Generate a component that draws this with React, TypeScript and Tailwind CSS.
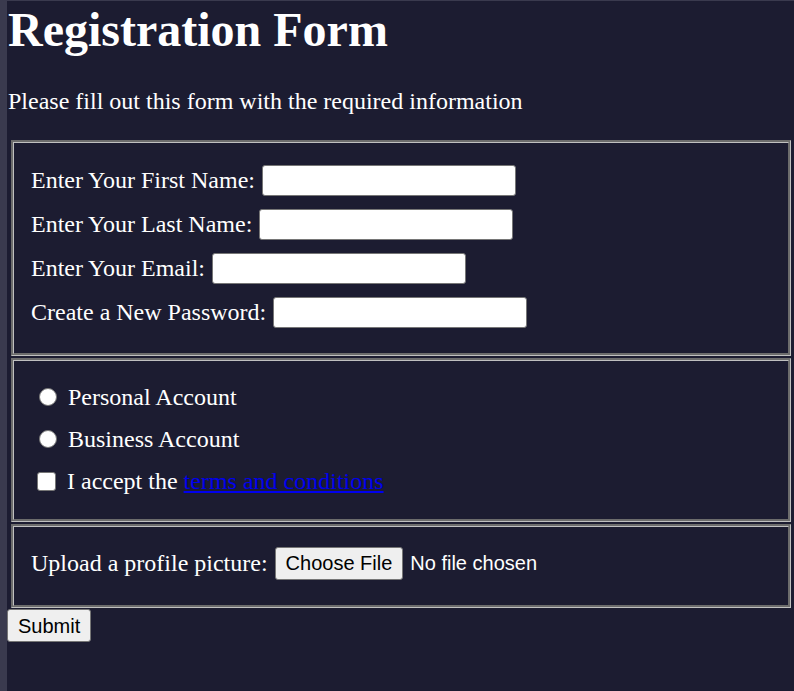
import React from "react"

const fieldsetCls =
  "mx-[3px] border-[3px] [border-style:groove] border-[#c0c0c0] pl-[17px] pr-[18px]"

const textInput =
  "ml-[7px] w-[254px] h-[31px] bg-white border border-[#767676] rounded-[3px] text-black text-[20px] px-[3px]"

const nativeBtn =
  "h-[33px] px-[10px] bg-[#efefef] border border-[#767676] rounded-[3px] text-black text-[20px] [font-family:'Liberation_Sans',Arial,sans-serif]"

function Row({ label, type }: { label: string; type: string }) {
  return (
    <div className="flex items-center h-[44px]">
      <label>{label}</label>
      <input type={type} className={textInput} />
    </div>
  )
}

export default function App() {
  return (
    <div className="min-h-[691px] bg-[#1c1c31] flex text-white text-[24px] [font-family:'Liberation_Serif','Times_New_Roman',serif]">
      <div className="w-[7px] shrink-0 bg-[#3a3a4e]" />
      <div className="flex-1 border-t border-[#3a3a4e] pl-[1px]">
        <h1 className="mt-[1px] h-[55px] leading-[55px] text-[48px] font-bold">Registration Form</h1>
        <p className="mt-[31px] h-[27px] leading-[27px]">Please fill out this form with the required information</p>

        <form className="mt-[25px]">
          <fieldset className={`${fieldsetCls} pt-[15px] pb-[19px]`}>
            <Row label="Enter Your First Name:" type="text" />
            <Row label="Enter Your Last Name:" type="text" />
            <Row label="Enter Your Email:" type="email" />
            <Row label="Create a New Password:" type="password" />
          </fieldset>

          <fieldset className={`${fieldsetCls} mt-[2px] pt-[15px] pb-[17px]`}>
            <div className="flex items-center h-[42px]">
              <input
                type="radio"
                name="account"
                className="appearance-none ml-[8px] w-[18px] h-[18px] rounded-full bg-white border border-[#767676]"
              />
              <label className="ml-[11px]">Personal Account</label>
            </div>
            <div className="flex items-center h-[42px]">
              <input
                type="radio"
                name="account"
                className="appearance-none ml-[8px] w-[18px] h-[18px] rounded-full bg-white border border-[#767676]"
              />
              <label className="ml-[11px]">Business Account</label>
            </div>
            <div className="flex items-center h-[42px]">
              <input
                type="checkbox"
                className="appearance-none ml-[6px] w-[19px] h-[19px] rounded-[3px] bg-white border border-[#767676]"
              />
              <label className="ml-[11px]">
                I accept the{" "}
                <a href="#" className="text-[#0000ee] underline">
                  terms and conditions
                </a>
              </label>
            </div>
          </fieldset>

          <fieldset className={`${fieldsetCls} mt-[2px] pt-[14px] pb-[20px]`}>
            <div className="flex items-center h-[44px]">
              <label>Upload a profile picture:</label>
              <button type="button" className={`${nativeBtn} ml-[7px]`}>
                Choose File
              </button>
              <span className="ml-[7px] text-[20px] [font-family:'Liberation_Sans',Arial,sans-serif]">
                No file chosen
              </span>
            </div>
          </fieldset>

          <button type="submit" className={`${nativeBtn} block -ml-[1px] mt-[1px] h-[31px]`}>
            Submit
          </button>
        </form>
      </div>
    </div>
  )
}
